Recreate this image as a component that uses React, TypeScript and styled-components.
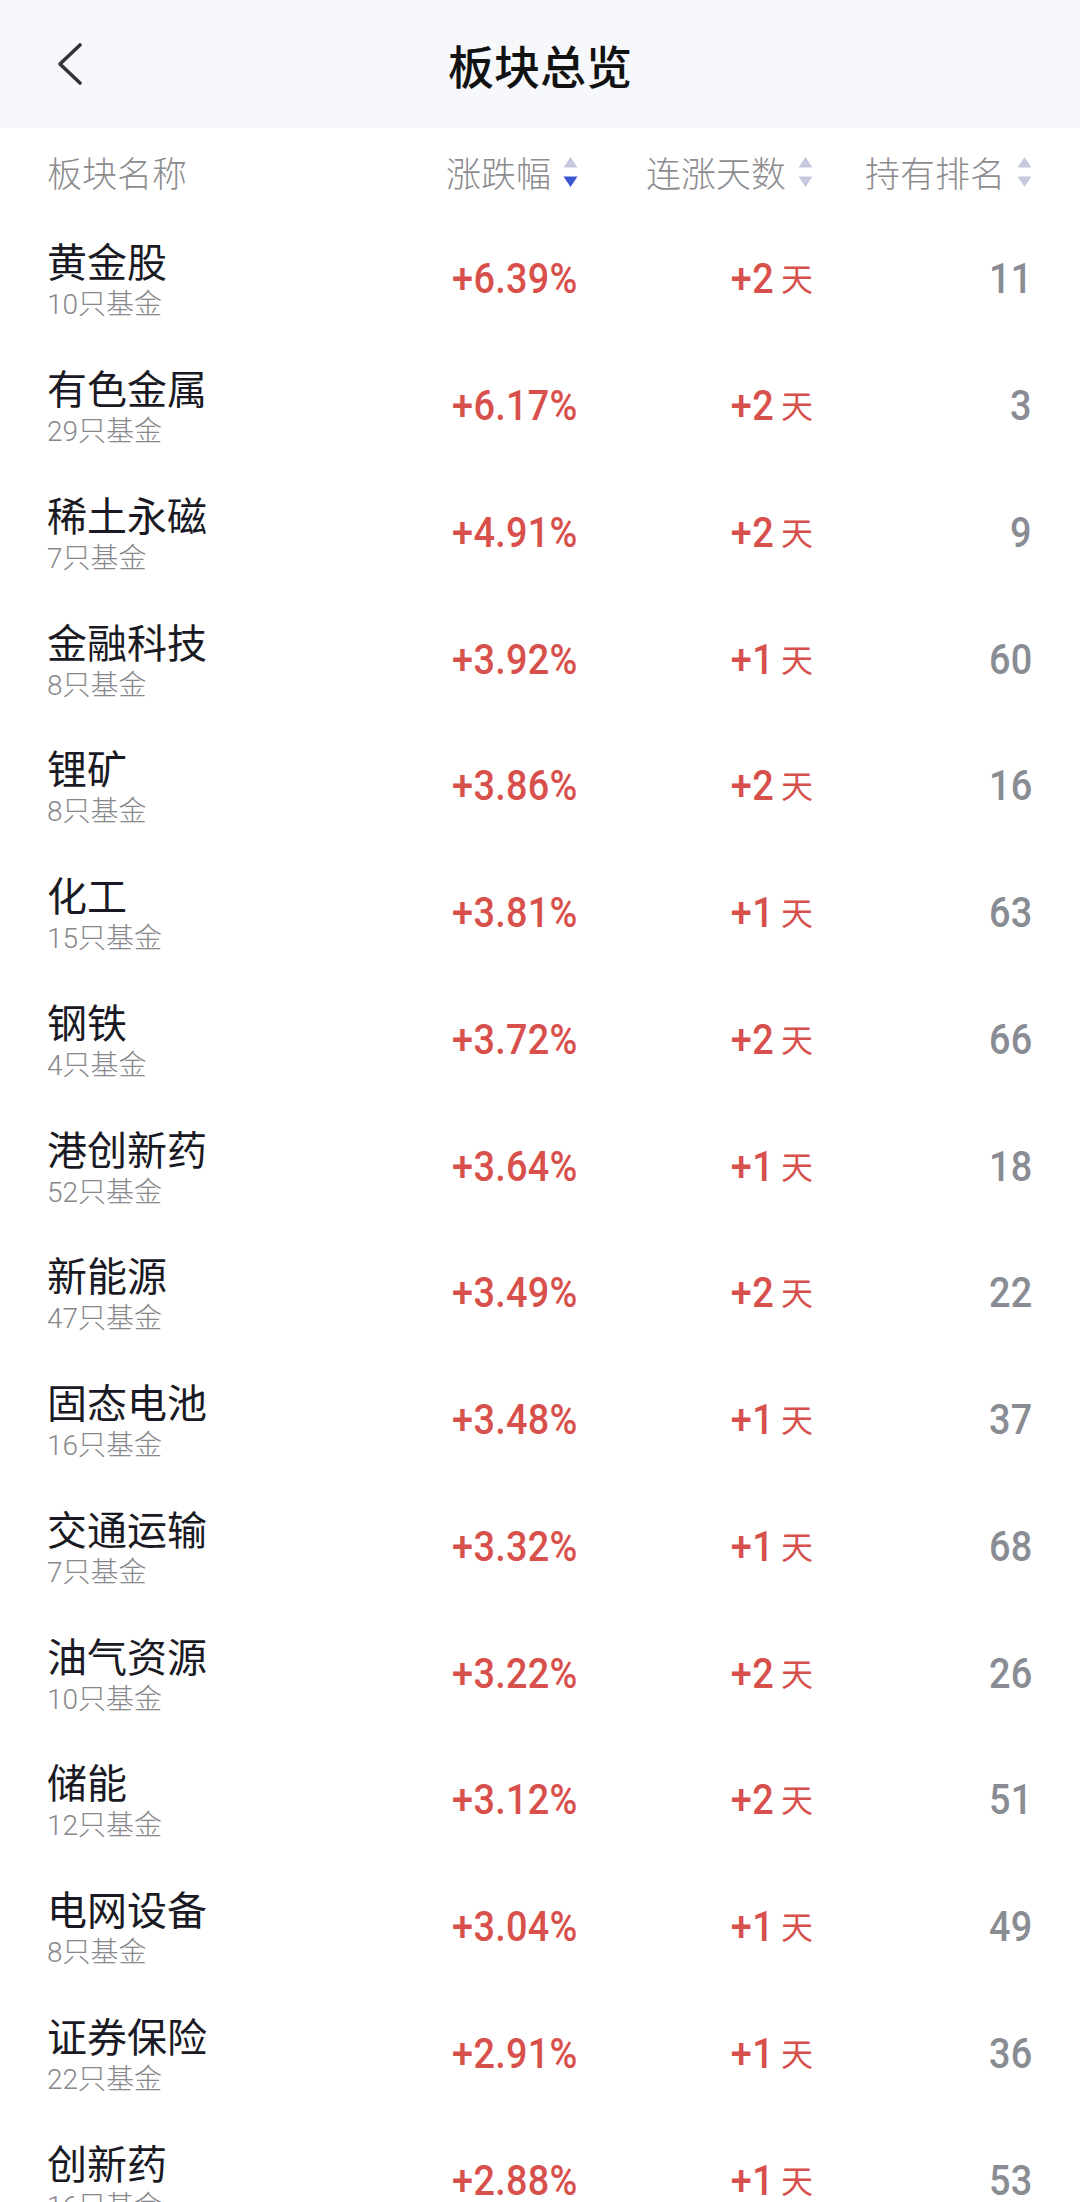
import React from "react";
import styled, { createGlobalStyle } from "styled-components";

const GlobalStyle = createGlobalStyle`
  html, body {
    margin: 0;
    padding: 0;
    background: #ffffff;
  }
  body {
    font-family: "Noto Sans CJK SC", Roboto, sans-serif;
    -webkit-font-smoothing: antialiased;
  }
`;

type Item = {
  name: string;
  funds: number;
  change: string;
  days: number;
  rank: number;
};

const DATA: Item[] = [
  { name: "黄金股", funds: 10, change: "+6.39%", days: 2, rank: 11 },
  { name: "有色金属", funds: 29, change: "+6.17%", days: 2, rank: 3 },
  { name: "稀土永磁", funds: 7, change: "+4.91%", days: 2, rank: 9 },
  { name: "金融科技", funds: 8, change: "+3.92%", days: 1, rank: 60 },
  { name: "锂矿", funds: 8, change: "+3.86%", days: 2, rank: 16 },
  { name: "化工", funds: 15, change: "+3.81%", days: 1, rank: 63 },
  { name: "钢铁", funds: 4, change: "+3.72%", days: 2, rank: 66 },
  { name: "港创新药", funds: 52, change: "+3.64%", days: 1, rank: 18 },
  { name: "新能源", funds: 47, change: "+3.49%", days: 2, rank: 22 },
  { name: "固态电池", funds: 16, change: "+3.48%", days: 1, rank: 37 },
  { name: "交通运输", funds: 7, change: "+3.32%", days: 1, rank: 68 },
  { name: "油气资源", funds: 10, change: "+3.22%", days: 2, rank: 26 },
  { name: "储能", funds: 12, change: "+3.12%", days: 2, rank: 51 },
  { name: "电网设备", funds: 8, change: "+3.04%", days: 1, rank: 49 },
  { name: "证券保险", funds: 22, change: "+2.91%", days: 1, rank: 36 },
  { name: "创新药", funds: 16, change: "+2.88%", days: 1, rank: 53 },
];

const Page = styled.div`
  width: 1080px;
  min-height: 2202px;
  background: #ffffff;
  overflow: hidden;
`;

const NavBar = styled.header`
  height: 128px;
  background: #f6f8fc;
  display: grid;
  grid-template-columns: 1fr auto 1fr;
  align-items: center;
  padding: 0 0 0 50px;
  box-sizing: border-box;
`;

const BackButton = styled.button`
  justify-self: start;
  width: 40px;
  height: 56px;
  padding: 0;
  border: none;
  background: transparent;
  display: flex;
  align-items: center;
  justify-content: center;
  cursor: pointer;
`;

const Title = styled.h1`
  margin: 0;
  font-family: "Noto Sans CJK SC", sans-serif;
  font-size: 46px;
  font-weight: 500;
  line-height: 56px;
  color: #121212;
  transform: translateX(-25px);
`;

const Grid = styled.div`
  display: grid;
  grid-template-columns: 1fr 200px 235px 219px;
  align-items: center;
  padding: 0 48px 0 47px;
`;

const HeaderRow = styled(Grid)`
  height: 87px;
`;

const Row = styled(Grid)`
  height: 126.75px;
`;

const HeadCell = styled.div<{ $end?: boolean }>`
  display: flex;
  align-items: center;
  justify-content: ${(p) => (p.$end ? "flex-end" : "flex-start")};
  gap: 12px;
  font-family: "Noto Sans CJK SC", sans-serif;
  font-size: 35px;
  font-weight: 300;
  line-height: 44px;
  color: #8c8c8f;
`;

const NameBlock = styled.div`
  display: flex;
  flex-direction: column;
  padding-top: 4px;
`;

const Name = styled.div`
  font-family: "Noto Sans CJK SC", sans-serif;
  font-size: 40px;
  font-weight: 400;
  line-height: 50px;
  color: #1a1a24;
`;

const Sub = styled.div`
  font-family: Roboto, "Noto Sans CJK SC", sans-serif;
  font-size: 28px;
  font-weight: 300;
  line-height: 40px;
  color: #87878c;
`;

const ValueCell = styled.div`
  display: flex;
  align-items: baseline;
  justify-content: flex-end;
`;

const Digits = styled.span<{ $tone: "up" | "muted" }>`
  display: inline-block;
  font-family: Roboto, "Liberation Sans", sans-serif;
  font-size: 43px;
  font-weight: 500;
  line-height: 56px;
  color: ${(p) => (p.$tone === "up" ? "#d8504c" : "#8a8c94")};
  transform: scaleX(0.88);
  transform-origin: right center;
  letter-spacing: 0.3px;
`;

const DayUnit = styled.span`
  display: inline-block;
  font-family: "Noto Sans CJK SC", sans-serif;
  font-size: 32px;
  font-weight: 400;
  color: #d8504c;
  margin-left: 7px;
  transform: translateY(-2px);
`;

const SortIcon: React.FC<{ active?: "up" | "down" }> = ({ active }) => (
  <svg width="15" height="32" viewBox="0 0 15 32" aria-hidden="true">
    <path d="M7.5 1 L14.5 11.5 L0.5 11.5 Z" fill={active === "up" ? "#3b55d0" : "#c6c9dd"} />
    <path d="M0.5 20.5 L14.5 20.5 L7.5 31 Z" fill={active === "down" ? "#3b55d0" : "#c6c9dd"} />
  </svg>
);

const BackIcon = () => (
  <svg width="28" height="44" viewBox="0 0 28 44" aria-hidden="true">
    <path
      d="M24 3 L4 22 L24 41"
      fill="none"
      stroke="#333438"
      strokeWidth="3.6"
      strokeLinecap="round"
      strokeLinejoin="round"
    />
  </svg>
);

export default function App() {
  return (
    <>
      <GlobalStyle />
      <Page>
        <NavBar>
          <BackButton aria-label="返回">
            <BackIcon />
          </BackButton>
          <Title>板块总览</Title>
          <span />
        </NavBar>
        <HeaderRow>
          <HeadCell>板块名称</HeadCell>
          <HeadCell $end>
            涨跌幅
            <SortIcon active="down" />
          </HeadCell>
          <HeadCell $end>
            连涨天数
            <SortIcon />
          </HeadCell>
          <HeadCell $end>
            持有排名
            <SortIcon />
          </HeadCell>
        </HeaderRow>
        {DATA.map((d) => (
          <Row key={d.name}>
            <NameBlock>
              <Name>{d.name}</Name>
              <Sub>{d.funds}只基金</Sub>
            </NameBlock>
            <ValueCell>
              <Digits $tone="up">{d.change}</Digits>
            </ValueCell>
            <ValueCell>
              <Digits $tone="up">+{d.days}</Digits>
              <DayUnit>天</DayUnit>
            </ValueCell>
            <ValueCell>
              <Digits $tone="muted">{d.rank}</Digits>
            </ValueCell>
          </Row>
        ))}
      </Page>
    </>
  );
}
